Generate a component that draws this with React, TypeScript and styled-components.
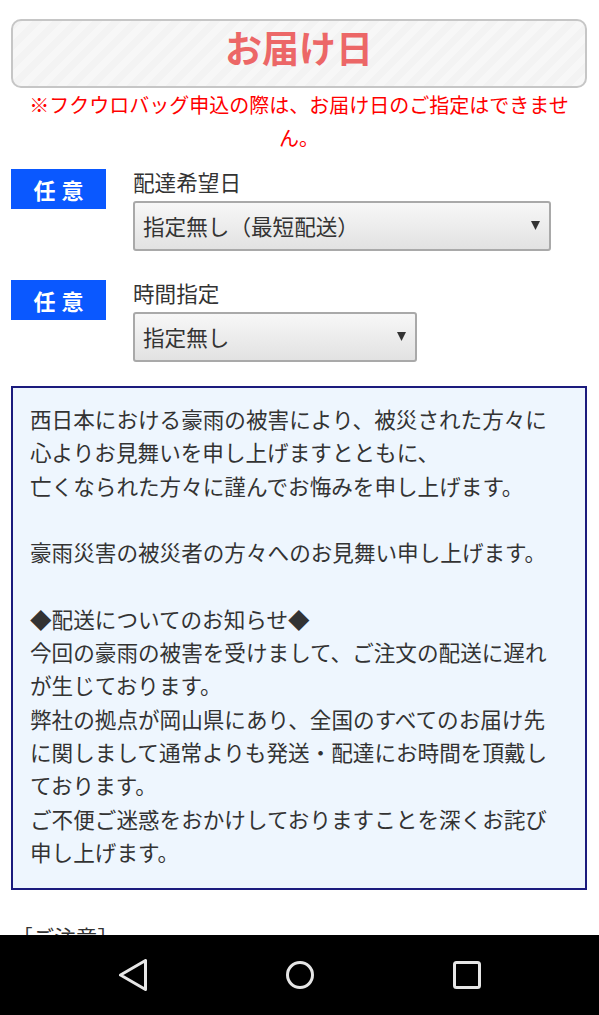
import React from "react";
import styled, { createGlobalStyle } from "styled-components";

const GlobalStyle = createGlobalStyle`
  html, body {
    margin: 0;
    padding: 0;
    background: #ffffff;
  }
  body {
    font-family: "Noto Sans CJK JP", "Noto Sans", sans-serif;
    color: #333333;
    overflow: hidden;
  }
`;

const Page = styled.main`
  display: flex;
  flex-direction: column;
  padding: 19px 12px 0 11px;
`;

const TitleBox = styled.div`
  box-sizing: border-box;
  height: 69px;
  border: 2px solid #c6c6c6;
  border-radius: 10px;
  background: repeating-linear-gradient(
    135deg,
    #f3f3f3 0 7px,
    #f7f7f7 7px 14px
  );
  display: flex;
  justify-content: center;
  padding-top: 8px;
`;

const Title = styled.h1`
  margin: 0;
  font-size: 37px;
  line-height: 37px;
  font-weight: 700;
  color: #ec6767;
`;

const Note = styled.p`
  margin: 0;
  padding: 0 10px;
  text-align: center;
  color: #ff0000;
  font-size: 20px;
  line-height: 33px;
`;

const Fields = styled.div`
  display: flex;
  flex-direction: column;
  gap: 29px;
  margin-top: 15px;
`;

const Field = styled.div`
  display: grid;
  grid-template-columns: 95px auto;
  column-gap: 27px;
  align-items: start;
`;

const Badge = styled.span`
  height: 40px;
  background: #0a58ff;
  color: #ffffff;
  font-weight: 700;
  font-size: 22px;
  letter-spacing: 6px;
  padding-left: 6px;
  display: flex;
  align-items: center;
  justify-content: center;
`;

const FieldBody = styled.div`
  display: flex;
  flex-direction: column;
  align-items: flex-start;
  gap: 6px;
`;

const Label = styled.div`
  font-size: 21.6px;
  line-height: 26px;
  color: #333333;
`;

const SelectBox = styled.div<{ $w: number }>`
  width: ${(p) => p.$w}px;
  box-sizing: border-box;
  height: 50px;
  border: 2px solid #a9a9a9;
  border-radius: 3px;
  background: linear-gradient(#f7f7f7, #e2e2e2);
  display: flex;
  align-items: center;
  justify-content: space-between;
  padding: 0 9px 2px 8px;
  font-size: 21.6px;
  color: #333333;
`;

const Arrow = styled.svg`
  width: 9px;
  height: 9px;
  flex: none;
`;

const Notice = styled.div`
  margin-top: 24px;
  border: 2px solid #1b1b7d;
  background: #eef6fe;
  padding: 14px 25px 20px 17px;
  font-size: 21.6px;
  line-height: 33.3px;
  color: #333333;
`;

const Para = styled.p`
  margin: 0 0 33.3px;
  &:last-child {
    margin-bottom: 0;
  }
`;

const Caution = styled.div`
  margin-top: 30px;
  font-size: 21.6px;
  line-height: 33px;
  color: #333333;
`;

const NavBar = styled.nav`
  position: fixed;
  left: 0;
  right: 0;
  bottom: 0;
  height: 80px;
  background: #000000;
  display: flex;
  align-items: center;
  justify-content: center;
  gap: 137px;
`;

const NavIcon = styled.svg`
  width: 30px;
  height: 32px;
  flex: none;
`;

const Select: React.FC<{ w: number; children: React.ReactNode }> = ({ w, children }) => (
  <SelectBox $w={w}>
    <span>{children}</span>
    <Arrow viewBox="0 0 9 9">
      <polygon points="0,0 9,0 4.5,9" fill="#333" />
    </Arrow>
  </SelectBox>
);

export default function App() {
  return (
    <>
      <GlobalStyle />
      <Page>
        <TitleBox>
          <Title>お届け日</Title>
        </TitleBox>
        <Note>※フクウロバッグ申込の際は、お届け日のご指定はできません。</Note>

        <Fields>
          <Field>
            <Badge>任意</Badge>
            <FieldBody>
              <Label>配達希望日</Label>
              <Select w={418}>指定無し（最短配送）</Select>
            </FieldBody>
          </Field>
          <Field>
            <Badge>任意</Badge>
            <FieldBody>
              <Label>時間指定</Label>
              <Select w={284}>指定無し</Select>
            </FieldBody>
          </Field>
        </Fields>

        <Notice>
          <Para>
            西日本における豪雨の被害により、被災された方々に
            <br />
            心よりお見舞いを申し上げますとともに、
            <br />
            亡くなられた方々に謹んでお悔みを申し上げます。
          </Para>
          <Para>豪雨災害の被災者の方々へのお見舞い申し上げます。</Para>
          <Para>
            ◆配送についてのお知らせ◆
            <br />
            今回の豪雨の被害を受けまして、ご注文の配送に遅れが生じております。
            <br />
            弊社の拠点が岡山県にあり、全国のすべてのお届け先に関しまして通常よりも発送・配達にお時間を頂戴しております。
            <br />
            ご不便ご迷惑をおかけしておりますことを深くお詫び申し上げます。
          </Para>
        </Notice>

        <Caution>［ご注意］</Caution>
      </Page>

      <NavBar>
        <NavIcon viewBox="0 0 30 32">
          <polygon
            points="2.5,16 27.5,1.5 27.5,30.5"
            fill="none"
            stroke="#e6e6e6"
            strokeWidth="3"
            strokeLinejoin="round"
          />
        </NavIcon>
        <NavIcon viewBox="0 0 30 32">
          <circle cx="15" cy="16" r="12.5" fill="none" stroke="#e6e6e6" strokeWidth="3" />
        </NavIcon>
        <NavIcon viewBox="0 0 30 32">
          <rect x="2.5" y="3.5" width="25" height="25" rx="2" fill="none" stroke="#e6e6e6" strokeWidth="3" />
        </NavIcon>
      </NavBar>
    </>
  );
}
